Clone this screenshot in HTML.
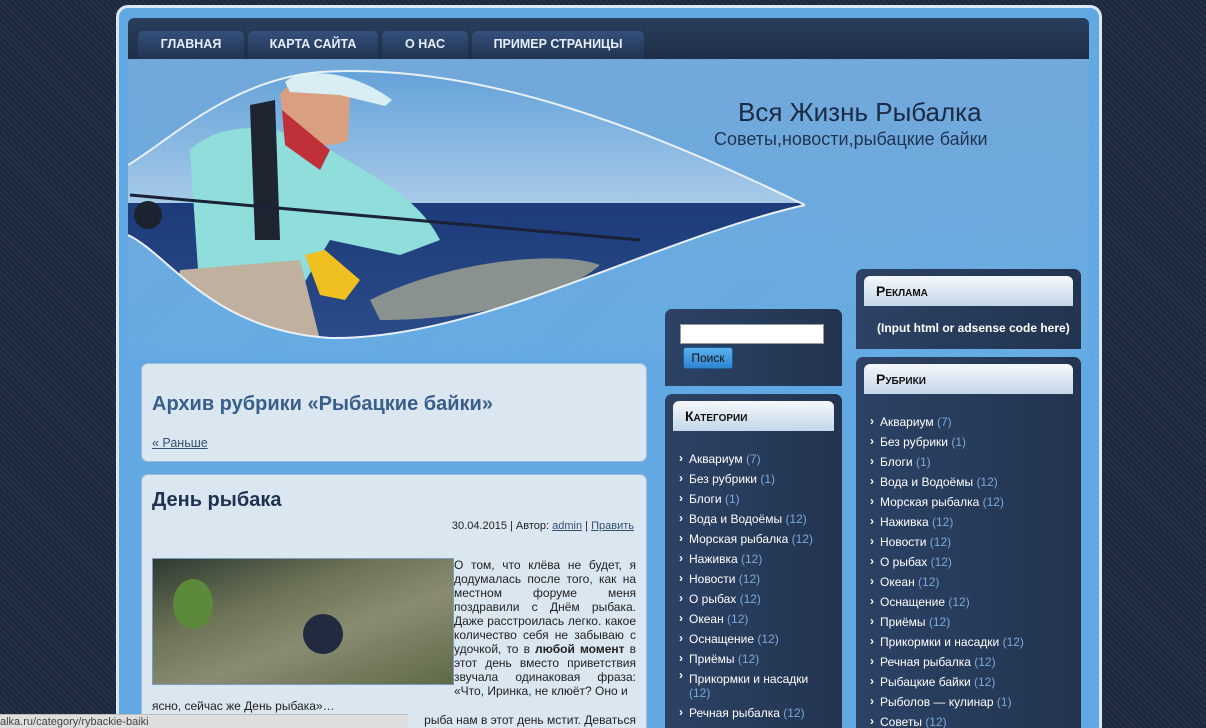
<!DOCTYPE html>
<html style="width:1206px;height:728px;overflow:hidden"><head><meta charset="utf-8">
<style>
*{margin:0;padding:0;box-sizing:border-box}
body{width:1206px;height:728px;overflow:hidden;font-family:"Liberation Sans",Arial,sans-serif;background:#1f2b40;background-image:repeating-linear-gradient(45deg,#1c273a 0 2px,#243249 2px 4px);position:relative}
.outer{position:absolute;left:116px;top:5px;width:986px;height:740px;background:#62a9e3;border:3px solid #d9e8f5;border-radius:12px}
.nav{position:absolute;left:128px;top:18px;width:961px;height:41px;background:linear-gradient(#2a3e5c,#1e2e48);border-radius:6px 6px 0 0}
.tab{position:absolute;top:13px;height:28px;background:linear-gradient(#34507a,#203452);border-radius:5px 5px 0 0;color:#e6eef8;font-weight:bold;font-size:12.5px;text-align:center;line-height:27px}
.hdr{position:absolute;left:128px;top:59px;width:961px;height:300px;background-image:repeating-linear-gradient(-45deg,rgba(255,255,255,.08) 0 1px,transparent 1px 3px),linear-gradient(#6fa6d8,#62a9e3)}
.title{position:absolute;left:738px;top:97px;font-size:26px;color:#1a2a44}
.sub{position:absolute;left:714px;top:129px;font-size:18px;color:#1f3452}
.box{position:absolute;background:#dae6f0;border:1px solid #9fbcd6;border-radius:7px}
.side{position:absolute;background:linear-gradient(90deg,#2c4266,#22344f);border-radius:7px 7px 0 0}
.wt{position:absolute;left:8px;right:8px;height:30px;background:linear-gradient(#f4f8fc,#c4d6e8);border-radius:6px 6px 0 0;font-weight:bold;font-variant:small-caps;font-size:14px;color:#111;padding-left:12px;line-height:30px}
ul{list-style:none;position:absolute;font-size:12px;color:#fff}
ul li{height:20px;line-height:20px;padding-left:10px;position:relative}
ul li:before{content:"›";position:absolute;left:0;top:-1px;font-weight:bold}
ul li span{color:#7ea7d6}
a{color:#33506e;text-decoration:underline}
</style></head><body>
<div class="outer"></div>
<div class="nav">
 <div class="tab" style="left:10px;width:106px">ГЛАВНАЯ</div>
 <div class="tab" style="left:120px;width:130px">КАРТА САЙТА</div>
 <div class="tab" style="left:254px;width:86px">О НАС</div>
 <div class="tab" style="left:344px;width:172px">ПРИМЕР СТРАНИЦЫ</div>
</div>
<div class="hdr"></div>
<svg style="position:absolute;left:0;top:0" width="1206" height="728">
<defs><clipPath id="leaf"><path d="M805,205 C650,130 480,62 320,72 C230,80 170,140 128,165 L128,235 C170,255 210,330 330,338 C480,340 650,240 805,205 Z"/></clipPath>
<linearGradient id="sky" x1="0" y1="0" x2="0" y2="1"><stop offset="0" stop-color="#5f9fd8"/><stop offset="1" stop-color="#a8cbe8"/></linearGradient>
<linearGradient id="sea" x1="0" y1="0" x2="0" y2="1"><stop offset="0" stop-color="#1d3b7a"/><stop offset="1" stop-color="#2b4c88"/></linearGradient></defs>
<g clip-path="url(#leaf)">
<rect x="128" y="60" width="700" height="145" fill="url(#sky)"/>
<rect x="128" y="203" width="700" height="140" fill="url(#sea)"/>
<path d="M370,300 C450,260 560,250 600,265 C560,300 470,320 380,320 Z" fill="#8a9290"/>
<path d="M190,150 C220,120 280,125 300,140 L330,150 C380,180 420,200 440,240 L400,255 L330,240 L300,290 L200,300 Z" fill="#8fdedb"/>
<path d="M250,105 L275,100 L280,240 L255,240 Z" fill="#1e2430"/>
<path d="M280,95 C290,75 335,72 350,95 L348,140 C330,150 295,145 285,130 Z" fill="#d8a080"/>
<path d="M282,110 L330,150 L320,170 L285,145 Z" fill="#c0303a"/>
<path d="M285,82 C300,68 350,68 392,100 L385,106 L340,95 L290,92 Z" fill="#d8eef4"/>
<path d="M305,255 L325,250 L360,280 L345,300 L320,295 Z" fill="#f0c020"/>
<path d="M130,195 L640,240" stroke="#1a2236" stroke-width="3"/>
<circle cx="148" cy="215" r="14" fill="#1c2230"/>
<path d="M180,270 L300,260 L320,340 L170,340 Z" fill="#c0b0a0"/>
</g>
<path d="M805,205 C650,130 480,62 320,72 C230,80 170,140 128,165 M128,235 C170,255 210,330 330,338 C480,340 650,240 805,205" stroke="#e8f0f8" stroke-width="2" fill="none"/>
</svg>
<div class="title">Вся Жизнь Рыбалка</div>
<div class="sub">Советы,новости,рыбацкие байки</div>

<div class="box" style="left:141px;top:363px;width:506px;height:99px">
 <div style="position:absolute;left:10px;top:29px;font-size:20px;font-weight:bold;color:#3a5e8a">Архив рубрики «Рыбацкие байки»</div>
 <div style="position:absolute;left:10px;top:72px;font-size:12.5px"><a>« Раньше</a></div>
</div>
<div class="box" style="left:141px;top:474px;width:506px;height:270px;font-size:12px;color:#222">
 <div style="position:absolute;left:10px;top:14px;font-size:20px;font-weight:bold;color:#1f3350">День рыбака</div>
 <div style="position:absolute;right:12px;top:45px;font-size:11px">30.04.2015 | Автор: <a>admin</a> | <a>Править</a></div>
 <div style="position:absolute;left:10px;top:83px;width:302px;height:127px;border:1px solid #7a9ac0;background:linear-gradient(160deg,#2c3a30 0%,#6d7458 35%,#8a8c72 60%,#5e6a48 100%)">
  <div style="position:absolute;left:150px;top:55px;width:40px;height:40px;border-radius:50%;background:#222a40"></div>
  <div style="position:absolute;left:20px;top:20px;width:40px;height:50px;background:#5c8a3a;border-radius:50%"></div>
 </div>
 <div style="position:absolute;left:312px;top:83px;width:182px;text-align:justify;line-height:14px">О том, что клёва не будет, я додумалась после того, как на местном форуме меня поздравили с Днём рыбака. Даже расстроилась легко. какое количество себя не забываю с удочкой, то в <b>любой момент</b> в этот день вместо приветствия звучала одинаковая фраза: «Что, Иринка, не клюёт? Оно и</div>
 <div style="position:absolute;left:10px;top:224px;line-height:14px">ясно, сейчас же День рыбака»…</div>
 <div style="position:absolute;right:10px;top:238px">рыба нам в этот день мстит. Деваться</div>
</div>
<div style="position:absolute;left:0;top:714px;width:408px;height:14px;background:#dedede;border-top:1px solid #bbb;font-size:11px;color:#444;line-height:14px">alka.ru/category/rybackie-baiki</div>

<div class="side" style="left:665px;top:309px;width:177px;height:77px">
 <div style="position:absolute;left:15px;top:15px;width:144px;height:20px;background:#fff;border:1px solid #999"></div>
 <div style="position:absolute;left:18px;top:38px;width:50px;height:22px;background:linear-gradient(#5ab0ee,#2f86d0);border:1px solid #1b5c9a;border-radius:3px;font-size:12px;text-align:center;line-height:20px;color:#111">Поиск</div>
</div>
<div class="side" style="left:665px;top:394px;width:177px;height:340px">
 <div class="wt" style="top:7px">Категории</div>
 <ul style="left:14px;top:55px;width:152px">
 <li>Аквариум <span>(7)</span></li><li>Без рубрики <span>(1)</span></li><li>Блоги <span>(1)</span></li><li>Вода и Водоёмы <span>(12)</span></li><li>Морская рыбалка <span>(12)</span></li><li>Наживка <span>(12)</span></li><li>Новости <span>(12)</span></li><li>О рыбах <span>(12)</span></li><li>Океан <span>(12)</span></li><li>Оснащение <span>(12)</span></li><li>Приёмы <span>(12)</span></li><li style="height:34px;line-height:14px;padding-top:3px">Прикормки и насадки<br><span>(12)</span></li><li>Речная рыбалка <span>(12)</span></li>
 </ul>
</div>
<div class="side" style="left:856px;top:269px;width:225px;height:80px">
 <div class="wt" style="top:7px">Реклама</div>
 <div style="position:absolute;left:21px;top:52px;font-size:12px;color:#fff;font-weight:bold">(Input html or adsense code here)</div>
</div>
<div class="side" style="left:856px;top:357px;width:225px;height:380px">
 <div class="wt" style="top:7px">Рубрики</div>
 <ul style="left:14px;top:55px;width:210px">
 <li>Аквариум <span>(7)</span></li><li>Без рубрики <span>(1)</span></li><li>Блоги <span>(1)</span></li><li>Вода и Водоёмы <span>(12)</span></li><li>Морская рыбалка <span>(12)</span></li><li>Наживка <span>(12)</span></li><li>Новости <span>(12)</span></li><li>О рыбах <span>(12)</span></li><li>Океан <span>(12)</span></li><li>Оснащение <span>(12)</span></li><li>Приёмы <span>(12)</span></li><li>Прикормки и насадки <span>(12)</span></li><li>Речная рыбалка <span>(12)</span></li><li>Рыбацкие байки <span>(12)</span></li><li>Рыболов — кулинар <span>(1)</span></li><li>Советы <span>(12)</span></li>
 </ul>
</div>
</body></html>
